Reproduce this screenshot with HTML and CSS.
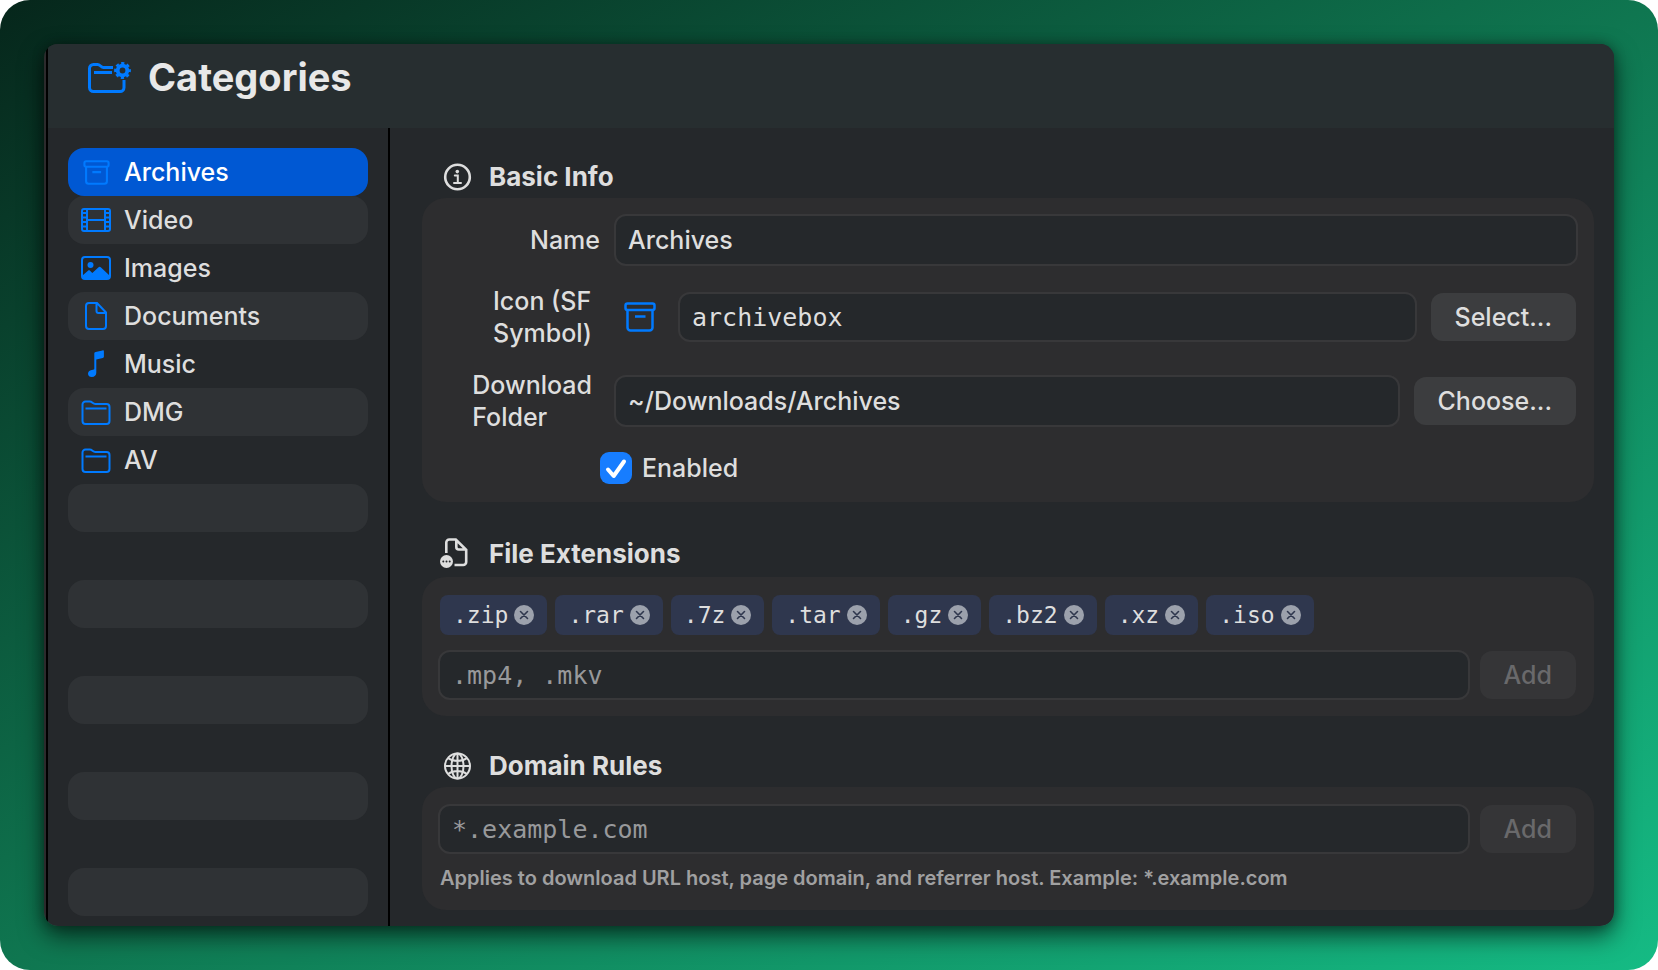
FILE: index.html
```html
<!DOCTYPE html>
<html lang="en">
<head>
  <meta charset="UTF-8">
  <meta name="viewport" content="width=device-width, initial-scale=1.0">
  <title>Categories</title>
  <link rel="stylesheet" href="styles.css">
</head>
<body>
  <!-- shared icons -->
  <svg class="sprite" aria-hidden="true">
    <symbol id="archivebox" viewBox="0 0 32 30">
      <rect x="1.500" y="1.500" width="29" height="6.500" rx="2"/>
      <path d="M3.500 8v17.500a3 3 0 0 0 3 3h19a3 3 0 0 0 3-3V8M11 14.500h10.500"/>
    </symbol>
    <symbol id="folder" viewBox="0 0 30 25">
      <path d="M1.500 21V4.500a3 3 0 0 1 3-3h4.200c2.600 0 3 2.500 5.600 2.500h11.200a3 3 0 0 1 3 3v14a3 3 0 0 1-3 3H4.500a3 3 0 0 1-3-3zM4.500 8.500h21"/>
    </symbol>
    <symbol id="xmark" viewBox="0 0 20 20">
      <circle cx="10" cy="10" r="10" fill="#9ca1ac"/>
      <path d="M6.500 6.500l7 7m0-7l-7 7" fill="none" stroke="#2f374e" stroke-width="1.600" stroke-linecap="round"/>
    </symbol>
  </svg>

  <div class="window">
    <header class="header">
      <svg class="header-icon" width="44" height="32" viewBox="0 0 44 32" aria-hidden="true">
        <path d="M25 6.500H15.500C12.800 6.500 12.300 3.500 9.500 3.500H5.500a4 4 0 0 0-4 4V26.500a4 4 0 0 0 4 4h26.500a4 4 0 0 0 4-4V19M6 11.500h18" fill="none" stroke="#007aff" stroke-width="3"/>
        <circle cx="34.500" cy="9.500" r="4.800" fill="none" stroke="#007aff" stroke-width="3.800"/>
        <circle cx="34.500" cy="9.500" r="7.200" fill="none" stroke="#007aff" stroke-width="2.400" stroke-dasharray="3.200 2.455" stroke-dashoffset="1.600"/>
      </svg>
      <h1>Categories</h1>
    </header>

    <div class="content">
      <nav class="sidebar">
        <ul>
          <li class="selected">
            <button type="button"><span class="icon"><svg class="small-box" width="27" height="25"><use href="#archivebox"/></svg></span>Archives</button>
          </li>
          <li>
            <button type="button"><span class="icon"><svg width="30" height="24" viewBox="0 0 30 24"><rect x="1" y="1" width="28" height="22" rx="2"/><path d="M6 1v22M24 1v22M6 12h18M1 5h5M1 9.500h5M1 14h5M1 18.500h5M24 5h5M24 9.500h5M24 14h5M24 18.500h5"/></svg></span>Video</button>
          </li>
          <li>
            <button type="button"><span class="icon"><svg width="30" height="24" viewBox="0 0 30 24"><rect x="1" y="1" width="28" height="22" rx="3"/><circle class="solid" cx="9.500" cy="9" r="3"/><path class="solid" d="M1.500 19.500l5.500-4.700c.7-.6 1.400-.6 2 0l2.300 2.200 6-5.600c.9-.8 1.800-.8 2.700 0l8.500 8.100V21a2 2 0 0 1-2 2H3.500a2 2 0 0 1-2-2z"/></svg></span>Images</button>
          </li>
          <li>
            <button type="button"><span class="icon"><svg width="22" height="28" viewBox="0 0 22 28"><path d="M12 1H4a3 3 0 0 0-3 3v20a3 3 0 0 0 3 3h14a3 3 0 0 0 3-3V10.500zM11.500 1v8a2 2 0 0 0 2 2H21"/></svg></span>Documents</button>
          </li>
          <li>
            <button type="button"><span class="icon"><svg width="18" height="28" viewBox="0 0 18 28"><path class="solid" d="M7.300 3.500c0-.9.400-1.400 1.300-1.600l6.900-1.500c.8-.2 1.400.2 1.400 1v5.400c0 .7-.4 1.100-1.100 1.300L9.300 9.400v13.400c0 2.600-1.800 4.200-4.500 4.200C2.600 27 1 25.700 1 23.700c0-1.900 1.400-3.200 3.700-3.700l1.500-.3c.8-.2 1.100-.6 1.100-1.300z"/></svg></span>Music</button>
          </li>
          <li>
            <button type="button"><span class="icon"><svg width="30" height="25"><use href="#folder"/></svg></span>DMG</button>
          </li>
          <li>
            <button type="button"><span class="icon"><svg width="30" height="25"><use href="#folder"/></svg></span>AV</button>
          </li>
          <li></li>
          <li></li>
          <li></li>
          <li></li>
          <li></li>
          <li></li>
          <li></li>
          <li></li>
          <li></li>
        </ul>
      </nav>

      <main class="main">
        <section>
          <h2>
            <svg width="34" height="28" viewBox="0 0 34 28" aria-hidden="true">
              <circle cx="17.500" cy="14" r="12.300" fill="none" stroke="#dedede" stroke-width="2.600"/>
              <circle cx="17.300" cy="8.600" r="1.800" fill="#dedede"/>
              <path d="M14.800 12.500h3v7.300M14 20h7" fill="none" stroke="#dedede" stroke-width="2" stroke-linecap="round"/>
            </svg>
            Basic Info
          </h2>
          <div class="card info-card">
            <div class="row">
              <label for="name">Name</label>
              <input class="field tall" type="text" id="name" value="Archives">
            </div>
            <div class="row two-line">
              <label for="symbol">Icon (SF<br>Symbol)</label>
              <svg class="symbol-preview" width="32" height="30" aria-hidden="true"><use href="#archivebox"/></svg>
              <input class="field mono" type="text" id="symbol" value="archivebox">
              <button class="btn" type="button">Select...</button>
            </div>
            <div class="row two-line">
              <label for="folder-path">Download<br>Folder</label>
              <input class="field tall" type="text" id="folder-path" value="~/Downloads/Archives">
              <button class="btn" type="button">Choose...</button>
            </div>
            <div class="check-row">
              <input type="checkbox" id="enabled" checked>
              <label for="enabled">Enabled</label>
            </div>
          </div>
        </section>

        <section>
          <h2>
            <svg width="34" height="36" viewBox="0 0 34 36" aria-hidden="true">
              <path d="M6.300 17V6.500a3 3 0 0 1 3-3h6.500l10.400 10.300V26a3 3 0 0 1-3 3H14.500M16.300 4v7a2.500 2.500 0 0 0 2.500 2.500h7" fill="none" stroke="#dedede" stroke-width="2.600"/>
              <circle cx="6.500" cy="25.500" r="6.500" fill="#dedede"/>
              <path d="M3.300 25.500h.01M6.500 25.500h.01M9.700 25.500h.01" stroke="#25282b" stroke-width="2" stroke-linecap="round"/>
            </svg>
            File Extensions
          </h2>
          <div class="card">
            <ul class="tags">
              <li>.zip<button type="button" aria-label="Remove .zip"><svg width="20" height="20"><use href="#xmark"/></svg></button></li>
              <li>.rar<button type="button" aria-label="Remove .rar"><svg width="20" height="20"><use href="#xmark"/></svg></button></li>
              <li>.7z<button type="button" aria-label="Remove .7z"><svg width="20" height="20"><use href="#xmark"/></svg></button></li>
              <li>.tar<button type="button" aria-label="Remove .tar"><svg width="20" height="20"><use href="#xmark"/></svg></button></li>
              <li>.gz<button type="button" aria-label="Remove .gz"><svg width="20" height="20"><use href="#xmark"/></svg></button></li>
              <li>.bz2<button type="button" aria-label="Remove .bz2"><svg width="20" height="20"><use href="#xmark"/></svg></button></li>
              <li>.xz<button type="button" aria-label="Remove .xz"><svg width="20" height="20"><use href="#xmark"/></svg></button></li>
              <li>.iso<button type="button" aria-label="Remove .iso"><svg width="20" height="20"><use href="#xmark"/></svg></button></li>
            </ul>
            <div class="add-row">
              <input class="field mono" type="text" placeholder=".mp4, .mkv" aria-label="New extensions">
              <button class="btn" type="button" disabled>Add</button>
            </div>
          </div>
        </section>

        <section>
          <h2>
            <svg width="34" height="28" viewBox="0 0 34 28" aria-hidden="true">
              <g fill="none" stroke="#dedede" stroke-width="2">
                <circle cx="17.500" cy="14" r="12.500"/>
                <ellipse cx="17.500" cy="14" rx="6" ry="12.500"/>
                <path d="M17.500 1.500v25M5 14h25M8 6c5.500 4 13.500 4 19 0M8 22c5.500-4 13.500-4 19 0"/>
              </g>
            </svg>
            Domain Rules
          </h2>
          <div class="card">
            <div class="add-row">
              <input class="field mono" type="text" placeholder="*.example.com" aria-label="New domain rule">
              <button class="btn" type="button" disabled>Add</button>
            </div>
            <p class="hint">Applies to download URL host, page domain, and referrer host. Example: *.example.com</p>
          </div>
        </section>
      </main>
    </div>
  </div>
</body>
</html>
```
FILE: styles.css
```css
* {
  box-sizing: border-box;
}
html {
  background: #fff;
}
body {
  margin: 0;
  padding: 44px;
  min-height: 100vh;
  display: flex;
  font-family: Inter, "Liberation Sans", sans-serif;
  font-size: 25px;
  font-weight: 500;
  line-height: 32px;
  color: #dedede;
}
/* rounded green backdrop */
body::before {
  content: "";
  position: absolute;
  inset: 0;
  z-index: -1;
  border-radius: 30px;
  background: linear-gradient(to bottom right, #06261b, #0f7650 50%, #15bb84);
}
button, input {
  font: inherit;
  color: inherit;
}
ul {
  list-style: none;
  margin: 0;
  padding: 0;
}
.sprite {
  position: absolute;
  width: 0;
  height: 0;
}
.window {
  flex: 1;
  display: flex;
  flex-direction: column;
  padding-left: 4px;
  border-radius: 14px;
  overflow: hidden;
  background: linear-gradient(90deg, #2c2a2c 2px, #000 2px, #000 4px, #25282b 4px);
  box-shadow: 0 10px 24px rgba(0, 0, 0, 0.6), 0 0 12px rgba(0, 0, 0, 0.3);
}
.header {
  display: flex;
  align-items: center;
  gap: 16px;
  height: 84px;
  padding: 0 40px 18px;
  background: #272e30;
}
h1 {
  margin: 0;
  font-size: 38px;
  line-height: 48px;
  color: #e8e8e8;
}
.content {
  flex: 1;
  display: flex;
}

/* sidebar */
.sidebar {
  width: 342px;
  padding: 20px 20px 10px;
  border-right: 2px solid #000;
}
.sidebar li {
  height: 48px;
  border-radius: 16px;
}
.sidebar li:nth-child(even) {
  background: #2f3235;
}
.sidebar li.selected {
  background: #0058d3;
  color: #fff;
}
.sidebar button {
  display: flex;
  align-items: center;
  gap: 12px;
  width: 100%;
  height: 48px;
  padding: 0 12px;
  background: none;
  border: none;
  cursor: pointer;
}
.icon {
  display: flex;
  justify-content: center;
  width: 32px;
}
.icon svg, .symbol-preview {
  fill: none;
  stroke: #007aff;
  stroke-width: 2;
}
.icon .small-box, .symbol-preview {
  stroke-width: 2.5;
}
.icon .solid {
  fill: #007aff;
  stroke: none;
}

/* settings */
.main {
  flex: 1;
  display: flex;
  flex-direction: column;
  gap: 34px;
  padding: 33px 20px 16px 32px;
}
h2 {
  display: flex;
  align-items: center;
  gap: 15px;
  min-height: 32px;
  margin: 0 0 5px;
  padding-left: 18px;
  font-size: 26px;
  line-height: 32px;
}
.card {
  padding: 17px 16px 16px;
  border-radius: 24px;
  background: #2d2d2f;
}
.info-card {
  display: flex;
  flex-direction: column;
  gap: 18px;
  padding: 16px 16px 18px;
}
.row {
  display: flex;
  align-items: center;
}
.row label {
  width: 162px;
  margin-right: 14px;
  display: flex;
  justify-content: flex-end;
}
.two-line {
  min-height: 66px;
}
.two-line label {
  padding-right: 8px;
}
.symbol-preview {
  margin: 0 22px 0 10px;
}
.field {
  flex: 1;
  min-width: 0;
  height: 50px;
  padding: 0 12px;
  border: 2px solid #38383a;
  border-radius: 12px;
  background: #25282b;
  outline: none;
}
.tall {
  height: 52px;
}
.mono {
  font-family: "DejaVu Sans Mono", monospace;
  font-size: 25px;
}
.field::placeholder {
  color: #98999b;
  opacity: 1;
}
.btn {
  height: 48px;
  margin: 0 2px 0 14px;
  padding: 0 24px;
  border: none;
  border-radius: 12px;
  background: #3c3d3f;
  cursor: pointer;
}
.btn:disabled {
  margin-left: 10px;
  background: #353537;
  color: #69696b;
  cursor: default;
}
.check-row {
  display: flex;
  align-items: center;
  gap: 10px;
  padding-left: 162px;
}
.check-row input {
  appearance: none;
  width: 32px;
  height: 32px;
  margin: 0;
  border-radius: 9px;
}
.check-row input:checked {
  background: #177dff url("data:image/svg+xml,%3Csvg xmlns='http://www.w3.org/2000/svg' viewBox='0 0 32 32'%3E%3Cpath d='M8 17.500l5.700 6.500L24 9.500' fill='none' stroke='white' stroke-width='4' stroke-linecap='round' stroke-linejoin='round'/%3E%3C/svg%3E");
}
.tags {
  display: flex;
  flex-wrap: wrap;
  gap: 8px;
  padding: 1px 2px 15px;
}
.tags li {
  display: flex;
  align-items: center;
  gap: 6px;
  height: 40px;
  padding: 0 13px;
  border-radius: 8px;
  background: #2f374e;
  font-family: "DejaVu Sans Mono", monospace;
  font-size: 23px;
}
.tags button {
  display: flex;
  padding: 0;
  border: none;
  background: none;
  cursor: pointer;
}
.add-row {
  display: flex;
  align-items: center;
}
.hint {
  margin: 8px 2px 0;
  font-size: 20px;
  font-weight: 600;
  color: #a0a0a1;
}
```
